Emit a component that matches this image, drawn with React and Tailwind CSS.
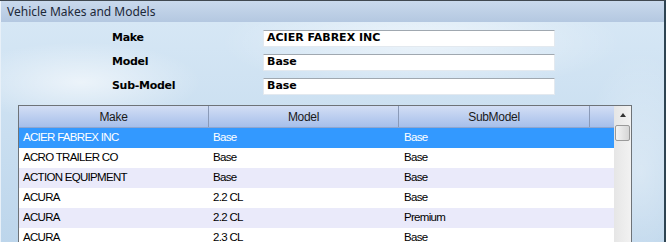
const rows = [
  { make: "ACIER FABREX INC", model: "Base", sub: "Base" },
  { make: "ACRO TRAILER CO", model: "Base", sub: "Base" },
  { make: "ACTION EQUIPMENT", model: "Base", sub: "Base" },
  { make: "ACURA", model: "2.2 CL", sub: "Base" },
  { make: "ACURA", model: "2.2 CL", sub: "Premium" },
  { make: "ACURA", model: "2.3 CL", sub: "Base" },
];

function Field({ label, value }) {
  return (
    <div className="flex items-center h-[24px]">
      <div className="w-[262px] pl-[111px] text-[11px] font-bold text-black whitespace-nowrap tracking-[-0.3px]">{label}</div>
      <div className="w-[292px] h-[17px] bg-white border border-[#e3e9ef] border-t-[#a0a8b0] flex items-center pl-[3px] text-[11px] font-bold text-black">
        {value}
      </div>
    </div>
  );
}

export default function App() {
  return (
    <div
      className="w-[666px] h-[242px] overflow-hidden flex flex-col border-t border-[#404850] border-r-2 border-r-[#2e4452]"
      style={{ fontFamily: "'DejaVu Sans', sans-serif" }}
    >
      {/* Title bar */}
      <div className="h-[21px] shrink-0 flex items-center pl-[6px] bg-gradient-to-b from-[#c9d9ec] to-[#b4c8e1] border-l border-[#eef4fa]">
        <span className="text-[12px] text-[#1c2838]" style={{ fontFamily: "'Noto Sans', sans-serif" }}>
          Vehicle Makes and Models
        </span>
      </div>

      {/* Body */}
      <div className="flex-1 flex flex-col border-l border-[#e8f0f8] bg-[#c3daee] bg-[radial-gradient(ellipse_120px_40px_at_80px_60px,rgba(255,255,255,0.6),transparent),radial-gradient(ellipse_200px_50px_at_420px_20px,rgba(255,255,255,0.55),transparent),radial-gradient(ellipse_60px_120px_at_640px_150px,rgba(255,255,255,0.35),transparent),linear-gradient(to_bottom,#d6e7f5,#bcd5eb)]">
        <div className="pt-[4px] flex flex-col">
          <Field label="Make" value="ACIER FABREX INC" />
          <Field label="Model" value="Base" />
          <Field label="Sub-Model" value="Base" />
        </div>

        {/* Grid */}
        <div className="ml-[17px] mt-[7px] w-[614px] border border-[#6e7378] bg-white flex" style={{ fontFamily: "'Liberation Sans', Arial, sans-serif" }}>
          <div className="flex-1 flex flex-col">
            <div className="h-[22px] flex bg-gradient-to-b from-[#d3def5] to-[#a6bfea] border-b border-[#8fa6cf] text-[12px] text-[#1a1a1a] tracking-[-0.3px]">
              <div className="w-[190px] flex items-center justify-center border-r border-[#8a9ab8]">Make</div>
              <div className="w-[190px] flex items-center justify-center border-r border-[#8a9ab8]">Model</div>
              <div className="w-[191px] flex items-center justify-center border-r border-[#8a9ab8]">SubModel</div>
              <div className="flex-1" />
            </div>
            {rows.map((r, i) => (
              <div
                key={i}
                className={`h-[20px] shrink-0 flex items-center text-[11.5px] tracking-[-0.7px] ${
                  i === 0 ? "bg-[#3399ff] text-white" : i % 2 === 0 ? "bg-[#eaeafa] text-black" : "bg-white text-black"
                }`}
              >
                <div className="w-[190px] pl-[4px] whitespace-nowrap">{r.make}</div>
                <div className="w-[190px] pl-[4px] whitespace-nowrap">{r.model}</div>
                <div className="w-[191px] pl-[5px] whitespace-nowrap">{r.sub}</div>
              </div>
            ))}
          </div>

          {/* Scrollbar */}
          <div className="w-[17px] bg-gradient-to-r from-[#e6e6e6] to-[#f2f2f2] flex flex-col items-center">
            <div className="h-[17px] w-full flex items-center justify-center">
              <div className="w-0 h-0 border-l-[3px] border-r-[3px] border-b-[4px] border-l-transparent border-r-transparent border-b-[#333]" />
            </div>
            <div className="mt-[2px] w-[15px] h-[16px] rounded-[2px] border border-[#9a9a9a] bg-gradient-to-r from-[#f4f4f4] to-[#d6d6d6]" />
          </div>
        </div>
      </div>
    </div>
  );
}
